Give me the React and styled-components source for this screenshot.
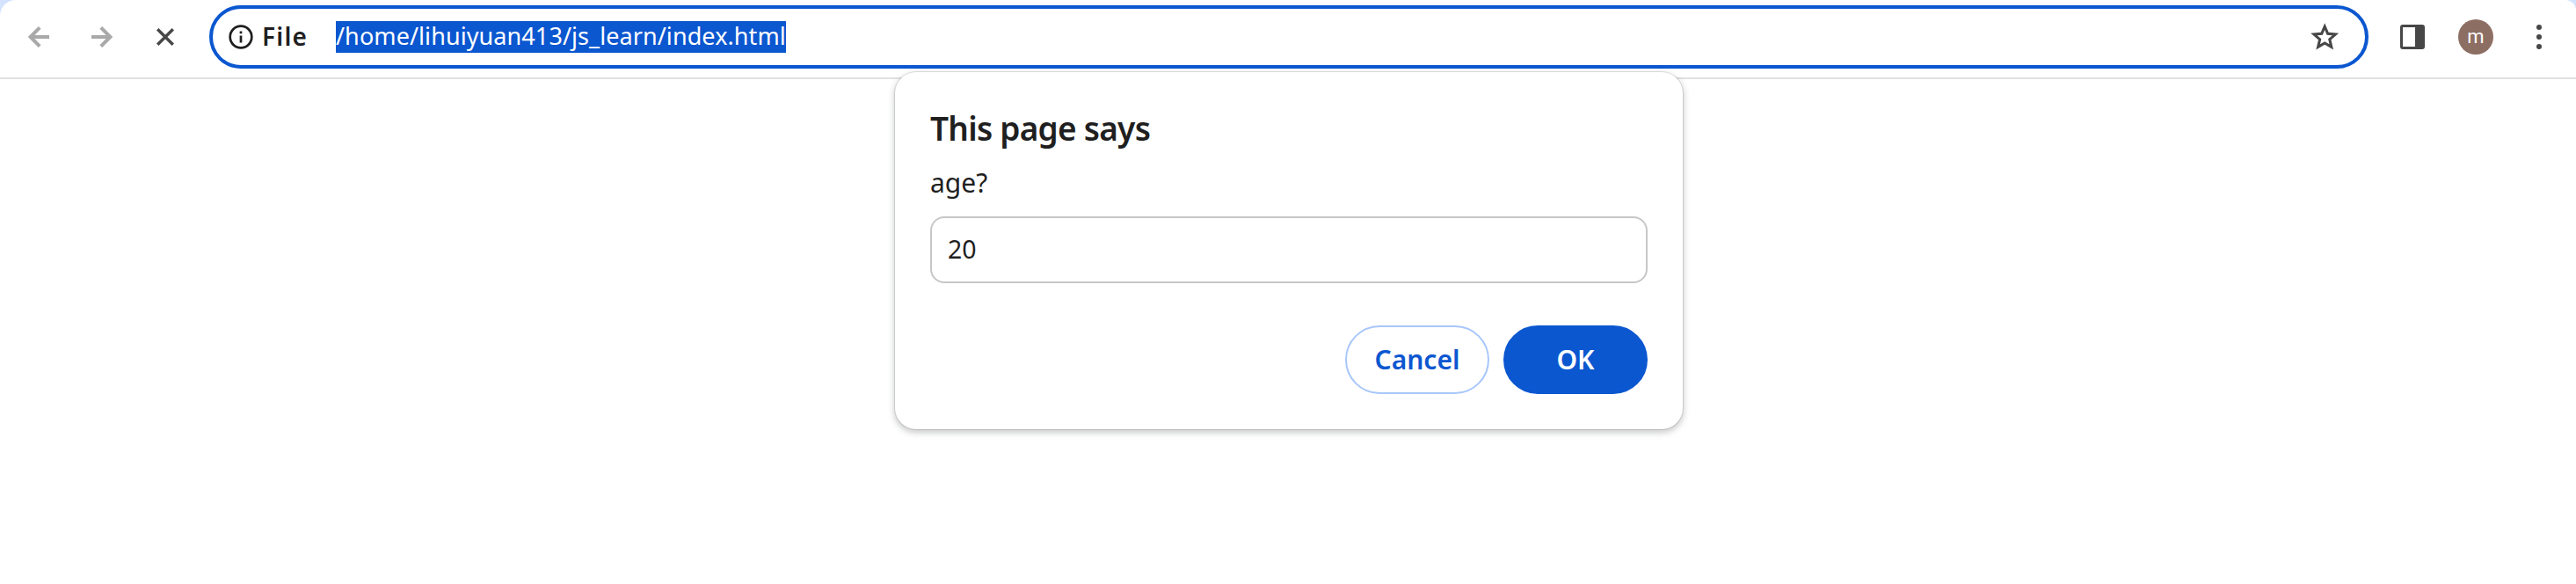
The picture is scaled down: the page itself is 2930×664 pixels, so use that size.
import React from "react";
import styled, { createGlobalStyle } from "styled-components";

const Global = createGlobalStyle`
  *, *::before, *::after { box-sizing: border-box; }
  body { margin: 0; background: #fff; font-family: "Noto Sans", "Open Sans", sans-serif; color: #1f1f1f; }
  button, input { font: inherit; color: inherit; margin: 0; }
`;

const Page = styled.div`
  height: 664px;
  overflow: hidden;
  background: #fff;
`;

const Strip = styled.header`
  background: #d3e3fd;
`;

const Toolbar = styled.div`
  height: 90px;
  padding: 6px 22px 10px 0;
  display: flex;
  align-items: center;
  background: #fff;
  border-bottom: 2px solid #e1e1e1;
  border-radius: 18px 12px 0 0;
`;

const Nav = styled.nav`
  width: 238px;
  padding-left: 24px;
  display: flex;
  gap: 32px;
`;

const IconButton = styled.button`
  width: 40px;
  height: 40px;
  padding: 0;
  border: 0;
  background: none;
  display: grid;
  place-items: center;
  color: ${(p) => (p.$muted ? "#a9a9a9" : "#474747")};
  svg { display: block; }
`;

const Omnibox = styled.div`
  flex: 1;
  height: 72px;
  padding: 0 26px 0 18px;
  display: flex;
  align-items: center;
  border: 4px solid #0b57d0;
  border-radius: 36px;
`;

const Chip = styled.span`
  width: 122px;
  display: flex;
  align-items: center;
  gap: 10px;
`;

const ChipLabel = styled.span`
  padding-bottom: 2px;
  font-size: 28px;
  line-height: 34px;
  font-weight: 600;
  letter-spacing: 1.2px;
`;

const Url = styled.span`
  height: 36px;
  line-height: 34px;
  font-size: 27px;
  letter-spacing: 0.08px;
  color: #fff;
  background: #0b57d0;
  margin-right: auto;
  white-space: nowrap;
`;

const Actions = styled.div`
  padding-left: 30px;
  display: flex;
  gap: 32px;
`;

const Avatar = styled.span`
  width: 40px;
  height: 40px;
  border-radius: 50%;
  background: #8d6e63;
  color: #fff;
  font: 22px/39px Roboto, sans-serif;
  text-align: center;
`;

const Dialog = styled.section`
  position: absolute;
  top: 82px;
  left: 1018px;
  width: 896px;
  height: 406px;
  padding: 38px 40px 40px;
  display: flex;
  flex-direction: column;
  background: #fff;
  border-radius: 24px;
  box-shadow: 0 0 0 1px rgba(0, 0, 0, 0.1), 0 3px 7px 1px rgba(60, 64, 67, 0.28);
`;

const Title = styled.h1`
  margin: 0;
  font-size: 37px;
  line-height: 52px;
  font-weight: 600;
  letter-spacing: -0.75px;
`;

const Message = styled.label`
  margin-top: 16px;
  font-size: 30px;
  line-height: 40px;
`;

const Field = styled.input`
  width: 100%;
  height: 76px;
  margin-top: 18px;
  padding: 0 18px 2px;
  font-size: 28.5px;
  background: #fff;
  border: 2px solid #c7c7c7;
  border-radius: 16px;
  outline: 0;
`;

const Buttons = styled.div`
  margin-top: auto;
  display: flex;
  justify-content: flex-end;
  gap: 16px;
`;

const Button = styled.button`
  width: 164px;
  height: 78px;
  padding: 0 0 2px;
  border-radius: 39px;
  border: 2px solid ${(p) => (p.$primary ? "#0b57d0" : "#a8c7fa")};
  background: ${(p) => (p.$primary ? "#0b57d0" : "#fff")};
  color: ${(p) => (p.$primary ? "#fff" : "#0b57d0")};
  font-size: 30px;
  font-weight: 600;
`;

const Arrow = ({ flip }) => (
  <svg width="24" height="24" viewBox="0 0 24 24" fill="none" stroke="currentColor" strokeWidth="4" transform={flip ? "scale(-1 1)" : undefined}>
    <path d="M24 12H3M13.2 1.4L2.6 12l10.600 10.600" />
  </svg>
);

const Stop = () => (
  <svg width="20" height="20" viewBox="0 0 20 20" fill="none" stroke="currentColor" strokeWidth="3.400">
    <path d="M1.200 1.200l17.600 17.600M18.800 1.200L1.200 18.800" />
  </svg>
);

const Info = () => (
  <svg width="28" height="28" viewBox="0 0 28 28" fill="none" stroke="currentColor" strokeWidth="2.700">
    <circle cx="14" cy="14" r="12.300" />
    <path d="M14 12.500v8M14 7.500v2.800" />
  </svg>
);

const Star = () => (
  <svg width="38.4" height="38.4" viewBox="0 0 24 24" fill="currentColor">
    <path d="M22 9.240l-7.190-.62L12 2 9.190 8.630 2 9.240l5.460 4.730L5.820 21 12 17.270 18.180 21l-1.630-7.030L22 9.240zM12 15.100l-3.300 2 .88-3.800-2.950-2.550 3.880-.33L12 6.800l1.500 3.620 3.880.33-2.950 2.550.88 3.800z" />
  </svg>
);

const Panel = () => (
  <svg width="30" height="30" viewBox="0 0 30 30">
    <path fill="currentColor" fillRule="evenodd" d="M4 1h22a3 3 0 0 1 3 3v22a3 3 0 0 1-3 3H4a3 3 0 0 1-3-3V4a3 3 0 0 1 3-3zM4 4v22h14V4z" />
  </svg>
);

const Dots = () => (
  <svg width="8" height="28" viewBox="0 0 8 28" fill="currentColor">
    <circle cx="4" cy="3" r="3" />
    <circle cx="4" cy="14" r="3" />
    <circle cx="4" cy="25" r="3" />
  </svg>
);

export default function App() {
  return (
    <Page>
      <Global />
      <Strip>
        <Toolbar>
          <Nav>
            <IconButton $muted aria-label="Back"><Arrow /></IconButton>
            <IconButton $muted aria-label="Forward"><Arrow flip /></IconButton>
            <IconButton aria-label="Stop"><Stop /></IconButton>
          </Nav>
          <Omnibox>
            <Chip><Info /><ChipLabel>File</ChipLabel></Chip>
            <Url>/home/lihuiyuan413/js_learn/index.html</Url>
            <IconButton aria-label="Bookmark"><Star /></IconButton>
          </Omnibox>
          <Actions>
            <IconButton aria-label="Side panel"><Panel /></IconButton>
            <Avatar>m</Avatar>
            <IconButton aria-label="Menu"><Dots /></IconButton>
          </Actions>
        </Toolbar>
      </Strip>
      <Dialog role="dialog">
        <Title>This page says</Title>
        <Message htmlFor="answer">age?</Message>
        <Field id="answer" defaultValue="20" />
        <Buttons>
          <Button>Cancel</Button>
          <Button $primary>OK</Button>
        </Buttons>
      </Dialog>
    </Page>
  );
}
